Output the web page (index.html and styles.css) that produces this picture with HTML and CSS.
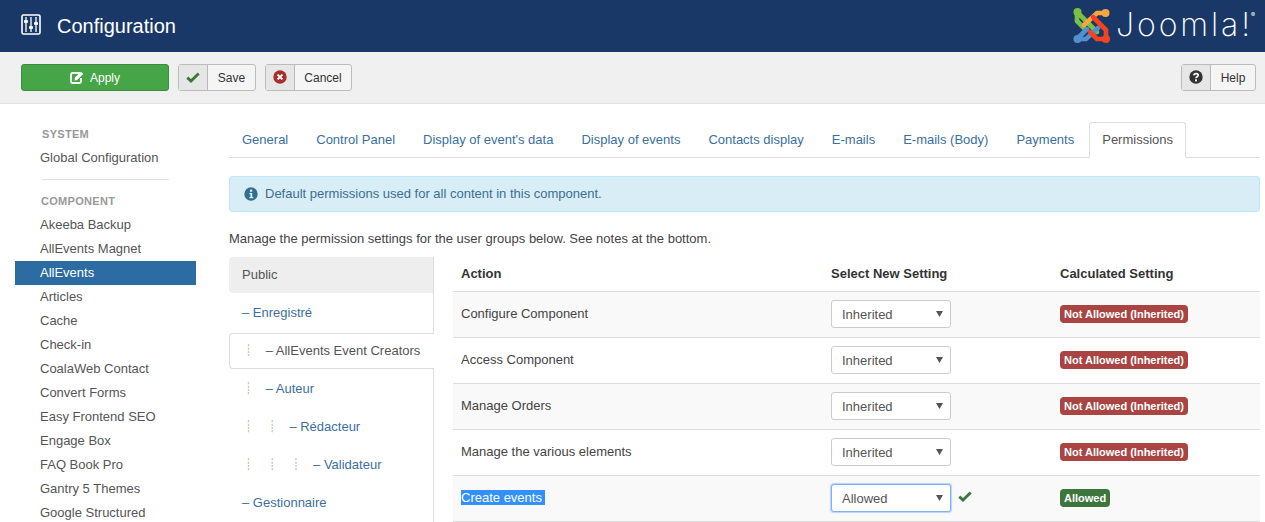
FILE: index.html
```html
<!DOCTYPE html>
<html lang="en">
<head>
<meta charset="utf-8">
<title>Configuration</title>
<link rel="stylesheet" href="styles.css">
</head>
<body>
<header class="topbar">
  <svg class="cfg-icon" width="20" height="21" viewBox="0 0 20 21"><rect x="1" y="1" width="18" height="19" rx="1.5" fill="none" stroke="#fff" stroke-width="1.6"/><path d="M5 3v15M10 3v15M15 3v15" stroke="#fff" stroke-width="1.3"/><path d="M3 7.5h4M8 13.5h4M13 9.5h4" stroke="#fff" stroke-width="2.4"/></svg>
  <h1 class="title">Configuration</h1>
  <div class="logo">
    <svg width="38" height="38" viewBox="0 0 38 38"><g fill="none" stroke-width="4.6" stroke-linecap="round"><path d="M4 15 L12 23" stroke="#7ac143"/><path d="M4 6 L4 15 M4 6 L24 26" stroke="#7ac143"/><path d="M32 7 L24 7 L11 19" stroke="#f9a541"/><path d="M4 33 L13 33 L25 22" stroke="#5091cd"/><path d="M4 33 L14 23" stroke="#5091cd"/><path d="M33 33 L33 24 L20 11" stroke="#f44321"/><path d="M33 33 L24 33 L17 26" stroke="#f44321"/></g><circle cx="4.500" cy="6" r="4" fill="#7ac143"/><circle cx="32.500" cy="7" r="4" fill="#f9a541"/><circle cx="4.500" cy="33" r="4" fill="#5091cd"/><circle cx="33" cy="33" r="4" fill="#f44321"/></svg>
    <span class="wordmark">Joomla!<sup class="reg">®</sup></span>
  </div>
</header>
<div class="toolbar">
  <button class="apply"><svg width="14" height="13" viewBox="0 0 14 13"><path d="M10 2H2.500A1.500 1.500 0 0 0 1 3.500v7A1.500 1.500 0 0 0 2.500 12h7a1.500 1.500 0 0 0 1.500-1.500V7" fill="none" stroke="#fff" stroke-width="1.8"/><path d="M5 6.500 11 .8l2.200 2.200-6 6L4.500 9.500z" fill="#fff"/></svg>Apply</button>
  <button class="tbtn save"><span class="tico"><svg width="14" height="11" viewBox="0 0 14 11"><path d="M1.300 5.600 5 9l7.700-7.600" fill="none" stroke="#3c763d" stroke-width="2.8"/></svg></span><span class="tlabel">Save</span></button>
  <button class="tbtn cancel"><span class="tico"><svg width="14" height="14" viewBox="0 0 14 14"><circle cx="7" cy="7" r="6.700" fill="#a5302c"/><path d="M4.600 4.600 9.400 9.400M9.400 4.600 4.600 9.400" stroke="#fff" stroke-width="2"/></svg></span><span class="tlabel">Cancel</span></button>
  <button class="tbtn help"><span class="tico"><svg width="14" height="14" viewBox="0 0 14 14"><circle cx="7" cy="7" r="6.700" fill="#333"/><path d="M4.800 5.400C5 3 9.200 3 9.200 5.300 9.200 6.800 7 6.800 7 8.300" fill="none" stroke="#fff" stroke-width="1.7"/><rect x="6" y="9.400" width="2" height="2" fill="#fff"/></svg></span><span class="tlabel">Help</span></button>
</div>
<div class="content">
  <nav class="sidebar">
    <div class="side-head first">System</div>
    <a class="side-item">Global Configuration</a>
    <hr class="side-rule">
    <div class="side-head">Component</div>
    <a class="side-item">Akeeba Backup</a>
    <a class="side-item">AllEvents Magnet</a>
    <a class="side-item active">AllEvents</a>
    <a class="side-item">Articles</a>
    <a class="side-item">Cache</a>
    <a class="side-item">Check-in</a>
    <a class="side-item">CoalaWeb Contact</a>
    <a class="side-item">Convert Forms</a>
    <a class="side-item">Easy Frontend SEO</a>
    <a class="side-item">Engage Box</a>
    <a class="side-item">FAQ Book Pro</a>
    <a class="side-item">Gantry 5 Themes</a>
    <a class="side-item">Google Structured</a>
  </nav>
  <main class="main">
    <ul class="tabs">
      <li class="tab">General</li>
      <li class="tab">Control Panel</li>
      <li class="tab">Display of event's data</li>
      <li class="tab">Display of events</li>
      <li class="tab">Contacts display</li>
      <li class="tab">E-mails</li>
      <li class="tab">E-mails (Body)</li>
      <li class="tab">Payments</li>
      <li class="tab current">Permissions</li>
    </ul>
    <div class="alert"><svg width="14" height="14" viewBox="0 0 14 14"><circle cx="7" cy="7" r="6.700" fill="#31708f"/><rect x="6" y="2.600" width="2.200" height="2.200" fill="#d9edf7"/><path d="M5.400 6h2.800v4h1v1.200H5.400V10h1V7.200h-1z" fill="#d9edf7"/></svg>Default permissions used for all content in this component.</div>
    <p class="note">Manage the permission settings for the user groups below. See notes at the bottom.</p>
    <div class="perm">
      <ul class="groups">
        <li class="group public">Public</li>
        <li class="group">– Enregistré</li>
        <li class="group selected"><span class="lvl">┊</span>– AllEvents Event Creators</li>
        <li class="group"><span class="lvl">┊</span>– Auteur</li>
        <li class="group"><span class="lvl">┊</span><span class="lvl">┊</span>– Rédacteur</li>
        <li class="group"><span class="lvl">┊</span><span class="lvl">┊</span><span class="lvl">┊</span>– Validateur</li>
        <li class="group">– Gestionnaire</li>
      </ul>
      <table class="rules">
        <thead><tr><th class="c1">Action</th><th class="c2">Select New Setting</th><th>Calculated Setting</th></tr></thead>
        <tbody>
          <tr><td>Configure Component</td><td class="sel"><select class="setting"><option>Inherited</option></select></td><td class="calc"><span class="badge no">Not Allowed (Inherited)</span></td></tr>
          <tr><td>Access Component</td><td class="sel"><select class="setting"><option>Inherited</option></select></td><td class="calc"><span class="badge no">Not Allowed (Inherited)</span></td></tr>
          <tr><td>Manage Orders</td><td class="sel"><select class="setting"><option>Inherited</option></select></td><td class="calc"><span class="badge no">Not Allowed (Inherited)</span></td></tr>
          <tr><td>Manage the various elements</td><td class="sel"><select class="setting"><option>Inherited</option></select></td><td class="calc"><span class="badge no">Not Allowed (Inherited)</span></td></tr>
          <tr><td><span class="picked">Create events</span></td><td class="sel"><div class="sel-row"><select class="setting focus"><option>Allowed</option></select><svg width="14" height="11" viewBox="0 0 14 11"><path d="M1.300 5.600 5 9l7.700-7.600" fill="none" stroke="#3c763d" stroke-width="2.8"/></svg></div></td><td class="calc"><span class="badge yes">Allowed</span></td></tr>
        </tbody>
      </table>
    </div>
  </main>
</div>
</body>
</html>
```
FILE: styles.css
```css
* { box-sizing: border-box; }
html, body { margin: 0; height: 522px; overflow: hidden; }
body { font-family: "Liberation Sans", Arial, sans-serif; font-size: 13px; line-height: 18px; color: #515151; background: #fff; }

.topbar { height: 52px; background: #1a3867; display: flex; align-items: center; padding-left: 21px; color: #fff; }
.cfg-icon { margin-top: -3px; }
.title { margin: 0 0 0 16px; font-size: 20px; font-weight: 400; line-height: 24px; }
.logo { margin-left: auto; margin-right: 10px; display: flex; align-items: center; gap: 5px; margin-top: -2px; }
.wordmark { font-family: Inter, sans-serif; font-weight: 200; font-size: 32px; line-height: 38px; color: #fff; letter-spacing: 2.9px; }
.reg { font-size: 6px; font-weight: 400; vertical-align: top; line-height: 18px; letter-spacing: 0; margin-left: -2px; }

.toolbar { height: 52px; background: #f0f0f0; border-bottom: 1px solid #e2e2e2; display: flex; align-items: flex-start; gap: 9px; padding: 12px 9px 0 21px; }
button { font-family: inherit; font-size: 12px; line-height: 18px; margin: 0; padding: 0; cursor: default; }
.apply { width: 148px; height: 27px; background: #46a546; border: 1px solid #3b8c3f; border-radius: 3px; color: #fff; display: flex; align-items: center; justify-content: center; gap: 6px; }
.tbtn { height: 27px; display: flex; background: #f5f5f5; border: 1px solid #bbb; border-radius: 3px; color: #333; }
.save { width: 78px; }
.cancel { width: 87px; }
.help { width: 75px; margin-left: auto; }
.tico { width: 29px; flex: none; background: #e6e6e6; border-right: 1px solid #b9b9b9; display: flex; align-items: center; justify-content: center; padding-bottom: 1px; }
.tlabel { flex: 1; text-align: center; line-height: 26px; }

.content { display: flex; align-items: flex-start; }
.sidebar { width: 181px; margin-left: 15px; padding-top: 18px; display: flex; flex-direction: column; }
.side-head { font-size: 11px; font-weight: 700; color: #999; text-transform: uppercase; padding-left: 26px; line-height: 24px; letter-spacing: .3px; }
.side-head.first { padding-left: 27px; }
.side-item { display: block; height: 24px; line-height: 24px; padding-left: 25px; color: #555; white-space: nowrap; }
.side-item.active { background: #2d6ca2; color: #fff; }
.side-rule { width: 127px; height: 1px; border: 0; background: #e0e0e0; margin: 9px 0 9px 27px; }

.main { width: 1031px; margin-left: 33px; padding-top: 18px; }
.tabs { list-style: none; margin: 0; padding: 0; display: flex; gap: 2px; border-bottom: 1px solid #ddd; height: 36px; }
.tab { height: 36px; padding: 8px 13px; color: #3b6f9f; border: 1px solid transparent; border-width: 1px 0; white-space: nowrap; }
.tab.current { color: #555; background: #fff; border: 1px solid #ddd; border-bottom-color: #fff; border-radius: 3px 3px 0 0; padding: 8px 12px; }

.alert { margin-top: 18px; height: 36px; background: #d9edf7; border: 1px solid #bce8f1; border-radius: 3px; color: #3a6f90; display: flex; align-items: center; gap: 7px; padding-left: 14px; }
.note { margin: 18px 0 9px; color: #444; }

.perm { display: flex; align-items: stretch; gap: 19px; }
.groups { list-style: none; margin: 0; padding: 0; width: 205px; flex: none; border-right: 1px solid #ddd; display: flex; flex-direction: column; gap: 2px; min-height: 270px; }
.group { height: 36px; padding: 9px 13px; color: #3b6f9f; white-space: nowrap; display: flex; }
.group.public { background: #eee; color: #555; border-radius: 4px 0 0 4px; }
.group.selected { color: #555; background: #fff; border: 1px solid #ddd; border-right: 0; border-radius: 4px 0 0 4px; margin-right: -1px; padding: 8px 12px; }
.lvl { width: 23.7px; flex: none; padding-left: 3px; color: #b9b29a; font-family: "DejaVu Sans", sans-serif; font-size: 11px; }

.rules { width: 807px; border-collapse: collapse; table-layout: fixed; color: #444; align-self: flex-start; }
.rules th { text-align: left; font-weight: 700; color: #333; height: 34px; padding: 7px 8px; border-bottom: 1px solid #ddd; }
.c1 { width: 370px; }
.c2 { width: 229px; }
.rules td { height: 46px; padding: 13px 8px 0; vertical-align: top; border-bottom: 1px solid #ddd; }
.rules tbody tr:nth-child(odd) td { background: #f9f9f9; }
.rules td.sel { padding-top: 8px; }
.rules td.calc { padding-top: 13px; }
.sel-row { display: flex; align-items: center; gap: 7px; }
.sel-row svg { margin-top: -3px; }
.setting { appearance: none; width: 120px; height: 28px; padding: 2px 10px 0; font: 13px/18px "Liberation Sans", Arial, sans-serif; color: #555; background: #fff url("data:image/svg+xml,%3Csvg xmlns='http://www.w3.org/2000/svg' width='7' height='6'%3E%3Cpath d='M0 0h7L3.5 6z' fill='%23555'/%3E%3C/svg%3E") no-repeat right 7px center; border: 1px solid #ccc; border-radius: 3px; display: block; }
.setting.focus { border-color: #7fb0f5; box-shadow: 0 0 1px 1px #b8d3fa; }
.badge { display: inline-block; height: 18px; line-height: 18px; padding: 0 4px; font-size: 11px; font-weight: 700; color: #fff; border-radius: 4px; vertical-align: top; white-space: nowrap; }
.badge.no { background: #a94442; }
.badge.yes { background: #3c763d; }
.picked { background: #3390ff; color: #fff; padding-right: 3px; }
```
